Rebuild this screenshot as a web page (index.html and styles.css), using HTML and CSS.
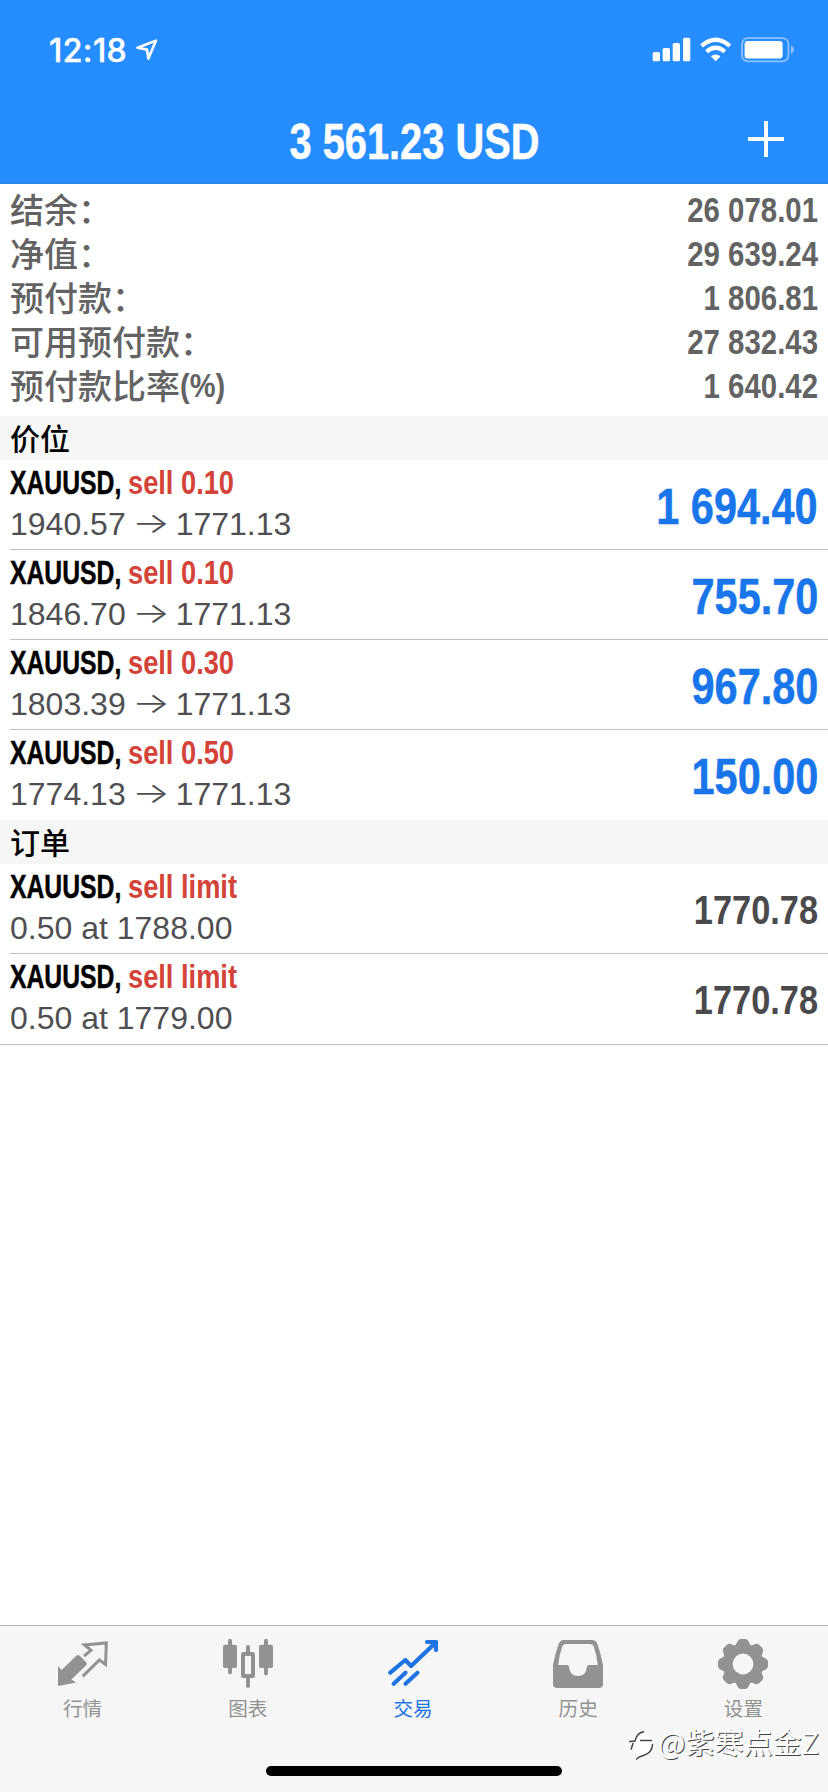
FILE: index.html
```html
<!DOCTYPE html>
<html lang="zh-CN">
<head>
<meta charset="utf-8">
<title>交易</title>
<link rel="stylesheet" href="styles.css">
</head>
<body>
<div class="app">
  <header class="header">
    <div class="status">
      <div class="status-left">
        <span class="time">12:18</span>
        <svg class="loc" width="24" height="24" viewBox="0 0 24 24"><path d="M2.5 9.8 L21 2.6 L13.4 20.6 L12 11.6 Z" fill="none" stroke="#fff" stroke-width="2.6" stroke-linejoin="round"/></svg>
      </div>
      <svg class="status-icons" width="142" height="26" viewBox="0 0 142 26">
        <g fill="#fff">
          <rect x="0.7" y="15" width="7.3" height="9.3" rx="1.6"/>
          <rect x="10.7" y="11" width="7.3" height="13.3" rx="1.6"/>
          <rect x="20.7" y="6" width="7.3" height="18.3" rx="1.6"/>
          <rect x="31" y="0.8" width="7.3" height="23.5" rx="1.6"/>
          <path d="M63.7 24.3 L58.8 19.3 Q63.7 15.8 68.6 19.3 Z"/>
          <rect x="92.6" y="4" width="38" height="17.4" rx="3.2"/>
        </g>
        <g fill="none" stroke="#fff" stroke-width="4.2">
          <path d="M49.6 8.8 Q63.7 -3.4 77.8 8.8"/>
          <path d="M54.6 14.6 Q63.7 6.8 72.8 14.6"/>
        </g>
        <rect x="90" y="1.2" width="46.5" height="23.2" rx="6" fill="none" stroke="#8cc2ff" stroke-width="1.8"/>
        <path d="M139 8.5 Q142 10 142 12.7 Q142 15.4 139 17 Z" fill="#8cc2ff"/>
      </svg>
    </div>
    <div class="nav">
      <h1 class="title"><span>3 561.23 USD</span></h1>
      <svg class="plus" width="36" height="36" viewBox="0 0 36 36"><path d="M18 0V36M0 18H36" stroke="#fff" stroke-width="4"/></svg>
    </div>
  </header>

  <section class="summary">
    <div class="sum-row"><span>结余：</span><b>26 078.01</b></div>
    <div class="sum-row"><span>净值：</span><b>29 639.24</b></div>
    <div class="sum-row"><span>预付款：</span><b>1 806.81</b></div>
    <div class="sum-row"><span>可用预付款：</span><b>27 832.43</b></div>
    <div class="sum-row"><span>预付款比率<i class="pct">(%)</i></span><b>1 640.42</b></div>
  </section>

  <h2 class="section">价位</h2>
  <ul class="list">
    <li class="item"><div class="info"><p class="deal"><span class="sym">XAUUSD,</span><span class="side">sell 0.10</span></p><p class="prices">1940.57<span class="arrow">→</span>1771.13</p></div><b class="profit">1 694.40</b></li>
    <li class="item"><div class="info"><p class="deal"><span class="sym">XAUUSD,</span><span class="side">sell 0.10</span></p><p class="prices">1846.70<span class="arrow">→</span>1771.13</p></div><b class="profit">755.70</b></li>
    <li class="item"><div class="info"><p class="deal"><span class="sym">XAUUSD,</span><span class="side">sell 0.30</span></p><p class="prices">1803.39<span class="arrow">→</span>1771.13</p></div><b class="profit">967.80</b></li>
    <li class="item"><div class="info"><p class="deal"><span class="sym">XAUUSD,</span><span class="side">sell 0.50</span></p><p class="prices">1774.13<span class="arrow">→</span>1771.13</p></div><b class="profit">150.00</b></li>
  </ul>

  <h2 class="section">订单</h2>
  <ul class="list orders">
    <li class="item"><div class="info"><p class="deal"><span class="sym">XAUUSD,</span><span class="side">sell limit</span></p><p class="prices">0.50 at 1788.00</p></div><b class="quote">1770.78</b></li>
    <li class="item"><div class="info"><p class="deal"><span class="sym">XAUUSD,</span><span class="side">sell limit</span></p><p class="prices">0.50 at 1779.00</p></div><b class="quote">1770.78</b></li>
  </ul>

  <footer class="tabbar">
    <nav class="tabs">
      <a class="tab">
        <svg width="50" height="52" viewBox="0 0 50 52"><path d="M0 28 L3.6 32 L18.6 17.6 Q20.3 16.4 21.8 17.8 L28.4 24.6 Q29.4 26 28.2 27.2 L13.4 41.6 L18.3 44.4 L0 48 Z" fill="#929292"/><path d="M26 18 L33 12.3 L26.5 7 L48.3 5 L47.6 26.5 L41.4 22 L24.7 38.4" fill="none" stroke="#929292" stroke-width="3"/></svg>
        <span>行情</span>
      </a>
      <a class="tab">
        <svg width="50" height="52" viewBox="0 0 50 52"><g fill="#929292"><rect x="5" y="0.7" width="4" height="35.5" rx="2"/><rect x="0" y="6.7" width="14" height="23.3" rx="2"/><rect x="41" y="0.7" width="4" height="36.8" rx="2"/><rect x="36" y="6.7" width="14" height="23.3" rx="2"/><rect x="23" y="7" width="4" height="9" rx="2"/><rect x="23" y="38" width="4" height="12" rx="2"/></g><rect x="20" y="16" width="10" height="22" rx="0.5" fill="none" stroke="#929292" stroke-width="4"/></svg>
        <span>图表</span>
      </a>
      <a class="tab active">
        <svg width="50" height="52" viewBox="0 0 50 52"><g fill="none" stroke="#1f74e4" stroke-width="4.2" stroke-linecap="round" stroke-linejoin="round"><path d="M2.3 34.6 L17.3 22 L23.1 28 L47.5 4.8"/><path d="M39 4 H48 V12"/><path d="M5.7 45.8 L17.5 34.8M17.5 45.8 L29.5 34.8"/></g></svg>
        <span>交易</span>
      </a>
      <a class="tab">
        <svg width="50" height="52" viewBox="0 0 50 52"><path fill="#929292" fill-rule="evenodd" d="M11 2 H39 Q43 2 44.4 6 Q48 16 50 27 V46 Q50 50 46 50 H4 Q0 50 0 46 V27 Q2 16 5.6 6 Q7 2 11 2 Z M12.5 6 Q10 6 9.2 8.5 Q6.2 17 5.2 27 H14.5 Q16 27 16.2 29.5 Q17 38 25 38 Q33 38 33.8 29.5 Q34 27 35.5 27 H44.8 Q43.8 17 40.8 8.5 Q40 6 37.5 6 Z"/></svg>
        <span>历史</span>
      </a>
      <a class="tab">
        <svg width="50" height="52" viewBox="0 0 50 52"><defs><path id="tooth" d="M14.5 9.5 Q17.6 8 19 4.4 Q20.4 1 23 1 H27 Q29.6 1 31 4.4 Q32.4 8 35.5 9.5 L25 26 Z"/></defs><g fill="#929292"><circle cx="25" cy="26" r="19.4"/><use href="#tooth"/><use href="#tooth" transform="rotate(45 25 26)"/><use href="#tooth" transform="rotate(90 25 26)"/><use href="#tooth" transform="rotate(135 25 26)"/><use href="#tooth" transform="rotate(180 25 26)"/><use href="#tooth" transform="rotate(225 25 26)"/><use href="#tooth" transform="rotate(270 25 26)"/><use href="#tooth" transform="rotate(315 25 26)"/></g><circle cx="25" cy="26" r="10.4" fill="#f6f6f6"/></svg>
        <span>设置</span>
      </a>
    </nav>
    <div class="home"></div>
    <div class="watermark">
      <svg width="26" height="34" viewBox="0 0 26 34"><circle cx="13" cy="17" r="10.6" fill="#fff"/><g fill="none" stroke="#444" stroke-width="1.5" stroke-linecap="round"><path d="M0.8 14.6 L6 14 Q8 6 14.5 4.8"/><path d="M11.7 13.5 H22.5"/><path d="M2.2 22 L4 16.5"/><path d="M23.5 17.5 Q23 26 14.5 28.5 Q10 29.6 7.6 32"/></g></svg>
      <span>@紫寒点金Z</span>
    </div>
  </footer>
</div>
</body>
</html>
```
FILE: styles.css
```css
* { box-sizing: border-box; margin: 0; padding: 0; }
body {
  width: 828px;
  background: #fff;
  font-family: "Liberation Sans", "Noto Sans CJK SC", sans-serif;
}
.app { display: flex; flex-direction: column; width: 828px; height: 1792px; overflow: hidden; }

.header { height: 184px; background: #258dff; border-bottom: 2px solid #2a86ea; color: #fff; }
.status { display: flex; justify-content: space-between; align-items: flex-start; height: 88px; padding: 37px 34px 0 49px; }
.status-left { display: flex; align-items: flex-start; gap: 6px; }
.time { width: 80px; font: 500 32px/28px Inter, sans-serif; letter-spacing: 0.4px; -webkit-text-stroke: 0.4px #fff; white-space: nowrap; }
.loc { margin-top: 1px; }
.nav { display: grid; grid-template-columns: 80px 1fr 80px; align-items: center; height: 94px; }
.title { grid-column: 2; padding-top: 13px; text-align: center; font-size: 49.5px; line-height: 56px; white-space: nowrap; }
.title span { display: inline-block; transform: scaleX(0.804); -webkit-text-stroke: 0.5px #fff; }
.plus { display: block; margin-top: 8px; }

.summary { height: 232px; padding: 4px 10px 0 10px; color: #636363; }
.sum-row { display: flex; justify-content: space-between; height: 44px; font-size: 35.5px; line-height: 44px; white-space: nowrap; }
.sum-row span { height: 44px; font: 500 34px/42px "Noto Sans CJK SC", sans-serif; }
.sum-row b { width: 158px; text-align: right; transform: scaleX(0.828); transform-origin: right center; }
.pct { display: inline-block; font: bold 33px/38px "Liberation Sans", sans-serif; transform: scaleX(0.88); transform-origin: left center; vertical-align: 2px; }

.section { height: 44px; padding-left: 10px; background: #f6f6f6; font: 500 30px/42px "Noto Sans CJK SC", sans-serif; color: #000; }

.list { list-style: none; padding-left: 10px; }
.item { display: flex; justify-content: space-between; align-items: center; height: 90px; padding-right: 10px; border-bottom: 1px solid #bfbfc1; white-space: nowrap; }
.item:last-child { border-bottom-color: transparent; }
.orders { border-bottom: 1px solid #bfbfc1; }
.info { padding-bottom: 4px; }
.deal { display: flex; height: 42px; font-size: 33.5px; font-weight: bold; line-height: 42px; }
.sym { width: 118px; color: #000; transform: scaleX(0.738); transform-origin: left center; -webkit-text-stroke: 0.5px #000; }
.side { color: #d44339; transform: scaleX(0.813); transform-origin: left center; }
.prices { height: 40px; font-size: 32px; line-height: 40px; color: #4f4f52; }
.arrow { display: inline-block; width: 50px; text-align: center; font-family: Inter, sans-serif; font-weight: 300; line-height: 36px; transform: translate(0, -1px) scale(1.25, 0.9); }
.profit { padding-top: 4px; font-size: 49.5px; color: #1976ea; transform: scaleX(0.838); transform-origin: right center; -webkit-text-stroke: 0.5px #1976ea; }
.quote { padding-top: 2px; font-size: 41.5px; color: #4a4a4d; transform: scaleX(0.828); transform-origin: right center; }

.tabbar { position: relative; height: 167px; margin-top: auto; background: #f6f6f6; border-top: 1px solid #b2b2b2; }
.tabs { display: grid; grid-template-columns: repeat(5, 1fr); padding-right: 2px; }
.tab { display: flex; flex-direction: column; align-items: center; padding-top: 12px; font: 400 19.6px/28px "Noto Sans CJK SC", sans-serif; color: #929292; }
.tab svg { display: block; }
.tab span { margin-top: 4px; }
.active { color: #1f74e4; }
.home { position: absolute; left: 266px; top: 140px; width: 296px; height: 10px; border-radius: 5px; background: #000; }
.watermark { position: absolute; left: 629px; top: 101px; display: flex; gap: 3px; font: 400 29px/28px "Noto Sans CJK SC", sans-serif; color: #fff; text-shadow: 1px 1px 0 #444; white-space: nowrap; }
```
